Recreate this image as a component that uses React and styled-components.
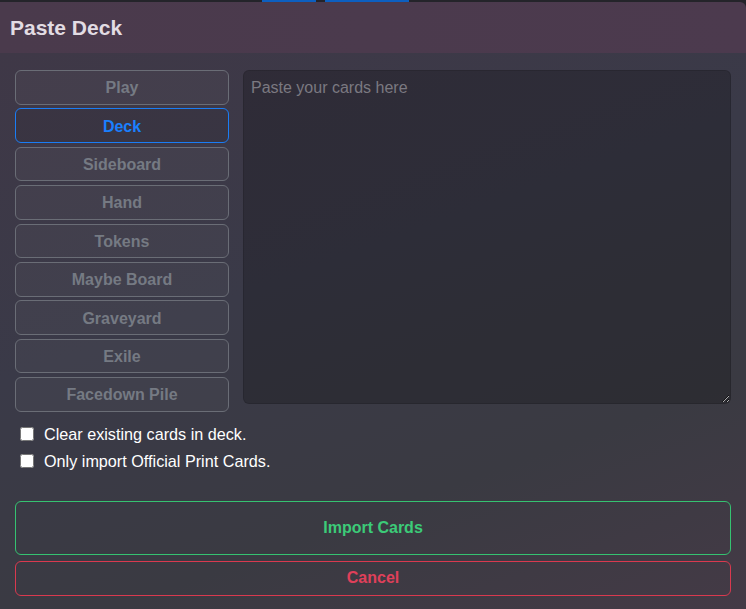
import React, { useState } from "react";
import styled, { createGlobalStyle } from "styled-components";

const GlobalStyle = createGlobalStyle`
  html, body {
    margin: 0;
    padding: 0;
    background: #24242a;
    font-family: "Liberation Sans", Arial, sans-serif;
  }
`;

const zones = [
  "Play",
  "Deck",
  "Sideboard",
  "Hand",
  "Tokens",
  "Maybe Board",
  "Graveyard",
  "Exile",
  "Facedown Pile",
];

const PasteDeck = () => {
  const [zone, setZone] = useState("Deck");

  return (
    <Page>
      <GlobalStyle />
      <PageStrip>
        <StripItem $w={262} />
        <StripItem $w={54} $blue />
        <StripItem $w={9} />
        <StripItem $w={84} $blue />
        <StripItem $w={336} />
      </PageStrip>
      <Modal>
        <Header>Paste Deck</Header>
        <Body>
          <TopRow>
            <ZoneList>
              {zones.map((name) => (
                <ZoneButton
                  key={name}
                  $active={name === zone}
                  onClick={() => setZone(name)}
                >
                  {name}
                </ZoneButton>
              ))}
            </ZoneList>
            <CardsInput placeholder="Paste your cards here" />
          </TopRow>
          <Options>
            <Option>
              <input type="checkbox" />
              Clear existing cards in deck.
            </Option>
            <Option>
              <input type="checkbox" />
              Only import Official Print Cards.
            </Option>
          </Options>
          <Actions>
            <ActionButton $color="#35c271" $text="#3ccb78" $tall>
              Import Cards
            </ActionButton>
            <ActionButton $color="#d9394f" $text="#e0405a">
              Cancel
            </ActionButton>
          </Actions>
        </Body>
      </Modal>
    </Page>
  );
};

const Page = styled.div`
  width: 746px;
  height: 609px;
  display: flex;
  flex-direction: column;
  overflow: hidden;
`;

const PageStrip = styled.div`
  height: 2px;
  display: flex;
  flex-shrink: 0;
`;

const StripItem = styled.div`
  width: ${(p) => p.$w}px;
  height: 2px;
  background: ${(p) => (p.$blue ? "#0d5fc0" : "transparent")};
`;

const Modal = styled.div`
  flex: 1;
  display: flex;
  flex-direction: column;
  border-top-right-radius: 6px;
  overflow: hidden;
`;

const Header = styled.div`
  height: 51px;
  flex-shrink: 0;
  display: flex;
  align-items: center;
  padding: 1px 10px 0;
  box-sizing: border-box;
  background: linear-gradient(90deg, #4a3a4c 0%, #4c3a4e 100%);
  color: #e2dce3;
  font-size: 21px;
  font-weight: bold;
`;

const Body = styled.div`
  flex: 1;
  padding: 17px 15px 14px 15px;
  background: linear-gradient(
    160deg,
    #3f3847 0%,
    #3a3a48 40%,
    #3a3a42 72%,
    #443a46 100%
  );
`;

const TopRow = styled.div`
  display: grid;
  grid-template-columns: 214px 1fr;
  column-gap: 14px;
  align-items: start;
`;

const ZoneList = styled.div`
  display: flex;
  flex-direction: column;
  gap: 3.8px;
`;

const ZoneButton = styled.button`
  box-sizing: border-box;
  height: 34.6px;
  padding: 2px 0 0;
  border-radius: 6px;
  border: 1px solid ${(p) => (p.$active ? "#1a7df5" : "#6a6d76")};
  background: ${(p) => (p.$active ? "rgba(0,0,0,0.06)" : "rgba(255,255,255,0.03)")};
  color: ${(p) => (p.$active ? "#1a80ff" : "#757a83")};
  font-family: "Liberation Sans", Arial, sans-serif;
  font-size: 16px;
  font-weight: bold;
  cursor: pointer;
`;

const CardsInput = styled.textarea`
  box-sizing: border-box;
  height: 334px;
  width: 100%;
  padding: 8px 7px 7px;
  border: 1px solid rgba(0, 0, 0, 0.12);
  border-radius: 6px;
  background: rgba(0, 0, 0, 0.22);
  color: #e0e0e0;
  font-family: "Liberation Sans", Arial, sans-serif;
  font-size: 16px;
  outline: none;
  &::placeholder {
    color: #7b7981;
  }
`;

const Options = styled.div`
  margin-top: 9px;
  display: flex;
  flex-direction: column;
`;

const Option = styled.label`
  height: 27px;
  display: flex;
  align-items: center;
  gap: 7px;
  color: #ffffff;
  font-size: 16.2px;
  input {
    margin: 0 3px 0 5px;
    width: 14px;
    height: 14px;
  }
`;

const Actions = styled.div`
  margin-top: 26px;
  display: flex;
  flex-direction: column;
  gap: 6px;
`;

const ActionButton = styled.button`
  box-sizing: border-box;
  height: ${(p) => (p.$tall ? "54px" : "35px")};
  border-radius: 6px;
  border: 1px solid ${(p) => p.$color};
  background: transparent;
  color: ${(p) => p.$text};
  font-family: "Liberation Sans", Arial, sans-serif;
  font-size: 16px;
  font-weight: bold;
  cursor: pointer;
`;

export default PasteDeck;
